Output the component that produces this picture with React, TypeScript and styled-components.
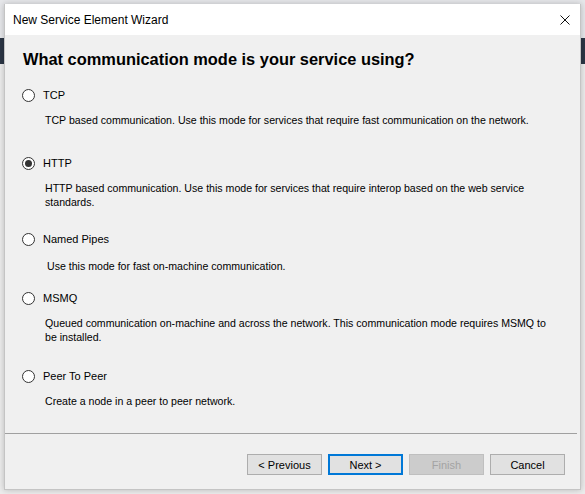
import React, { useState } from "react";
import styled, { createGlobalStyle } from "styled-components";

const GlobalStyle = createGlobalStyle`
  html, body {
    margin: 0;
    padding: 0;
  }
  body {
    width: 585px;
    height: 494px;
    overflow: hidden;
    background: linear-gradient(
      to bottom,
      #e6e7ea 0,
      #e6e7ea 38px,
      #2c3645 38px,
      #2c3645 64px,
      #ececec 64px,
      #ececec 100%
    );
    font-family: "Liberation Sans", Arial, sans-serif;
  }
`;

type Mode = {
  id: string;
  label: string;
  description: string;
  rowTop: number;
  descTop: number;
  indent: number;
};

const modes: Mode[] = [
  {
    id: "tcp",
    label: "TCP",
    description:
      "TCP based communication. Use this mode for services that require fast communication on the network.",
    rowTop: 19,
    descTop: 11,
    indent: 23,
  },
  {
    id: "http",
    label: "HTTP",
    description:
      "HTTP based communication. Use this mode for services that require interop based on the web service standards.",
    rowTop: 29,
    descTop: 11,
    indent: 23,
  },
  {
    id: "pipes",
    label: "Named Pipes",
    description: "Use this mode for fast on-machine communication.",
    rowTop: 23,
    descTop: 13,
    indent: 25,
  },
  {
    id: "msmq",
    label: "MSMQ",
    description:
      "Queued communication on-machine and across the network. This communication mode requires MSMQ to be installed.",
    rowTop: 18,
    descTop: 11,
    indent: 23,
  },
  {
    id: "p2p",
    label: "Peer To Peer",
    description: "Create a node in a peer to peer network.",
    rowTop: 25,
    descTop: 11,
    indent: 23,
  },
];

export default function App() {
  const [mode, setMode] = useState("http");
  return (
    <>
      <GlobalStyle />
      <Desktop>
        <Window>
          <TitleBar>
            <Title>New Service Element Wizard</Title>
            <CloseButton aria-label="Close">
              <svg width="10" height="10" viewBox="0 0 10 10">
                <path
                  d="M0.5 0.5 L9.5 9.5 M9.5 0.5 L0.5 9.5"
                  stroke="#111"
                  strokeWidth="1"
                  fill="none"
                />
              </svg>
            </CloseButton>
          </TitleBar>
          <Body>
            <Heading>What communication mode is your service using?</Heading>
            {modes.map((m) => (
              <Option key={m.id}>
                <RadioRow $top={m.rowTop} onClick={() => setMode(m.id)}>
                  <Radio $checked={mode === m.id} />
                  <RadioLabel>{m.label}</RadioLabel>
                </RadioRow>
                <Description $top={m.descTop} $indent={m.indent}>
                  {m.description}
                </Description>
              </Option>
            ))}
          </Body>
          <Footer>
            <Button>&lt; Previous</Button>
            <Button $primary>Next &gt;</Button>
            <Button disabled>Finish</Button>
            <Button>Cancel</Button>
          </Footer>
        </Window>
      </Desktop>
    </>
  );
}

const Desktop = styled.div`
  padding: 4px;
`;

const Window = styled.div`
  width: 577px;
  height: 486px;
  box-sizing: border-box;
  display: flex;
  flex-direction: column;
  background: #f0f0f0;
  border: 1px solid rgba(0, 0, 0, 0.18);
  border-top: none;
  box-shadow: 0 0 6px rgba(0, 0, 0, 0.22);
`;

const TitleBar = styled.div`
  height: 31px;
  flex: none;
  display: flex;
  align-items: center;
  justify-content: space-between;
  background: #ffffff;
  padding: 0 10px 0 8px;
`;

const Title = styled.div`
  font-size: 12px;
  color: #000;
`;

const CloseButton = styled.div`
  display: flex;
  align-items: center;
  padding-top: 1px;
`;

const Body = styled.div`
  flex: 1;
  padding: 14px 0 0 17px;
`;

const Heading = styled.div`
  margin-left: 1px;
  font-size: 16.4px;
  font-weight: bold;
  line-height: 20px;
  color: #000;
`;

const Option = styled.div`
  display: flex;
  flex-direction: column;
`;

const RadioRow = styled.div<{ $top: number }>`
  margin-top: ${(p) => p.$top}px;
  display: flex;
  align-items: center;
  gap: 8px;
  height: 14px;
  cursor: default;
`;

const Radio = styled.span<{ $checked: boolean }>`
  width: 13px;
  height: 13px;
  box-sizing: border-box;
  border-radius: 50%;
  border: 1px solid #333;
  background: #fff;
  display: flex;
  align-items: center;
  justify-content: center;

  &::after {
    content: "";
    width: 7px;
    height: 7px;
    border-radius: 50%;
    background: #333;
    display: ${(p) => (p.$checked ? "block" : "none")};
  }
`;

const RadioLabel = styled.span`
  font-size: 11px;
  line-height: 14px;
  color: #000;
`;

const Description = styled.div<{ $top: number; $indent: number }>`
  margin-top: ${(p) => p.$top}px;
  margin-left: ${(p) => p.$indent}px;
  margin-right: 20px;
  font-size: 10.6px;
  line-height: 14px;
  color: #000;
`;

const Footer = styled.div`
  flex: none;
  display: flex;
  justify-content: flex-end;
  gap: 6px;
  padding: 20px 12px 14px 0;
  margin: 0 3px 0 0;
  border-top: 1px solid #a0a0a0;
`;

const Button = styled.button<{ $primary?: boolean }>`
  width: 75px;
  height: 21px;
  box-sizing: border-box;
  padding: 0;
  font-family: "Liberation Sans", Arial, sans-serif;
  font-size: 11px;
  color: #000;
  background: #e1e1e1;
  border: ${(p) => (p.$primary ? "2px solid #0078d7" : "1px solid #adadad")};

  &:disabled {
    background: #cccccc;
    border-color: #bfbfbf;
    color: #a3a3a3;
  }
`;
